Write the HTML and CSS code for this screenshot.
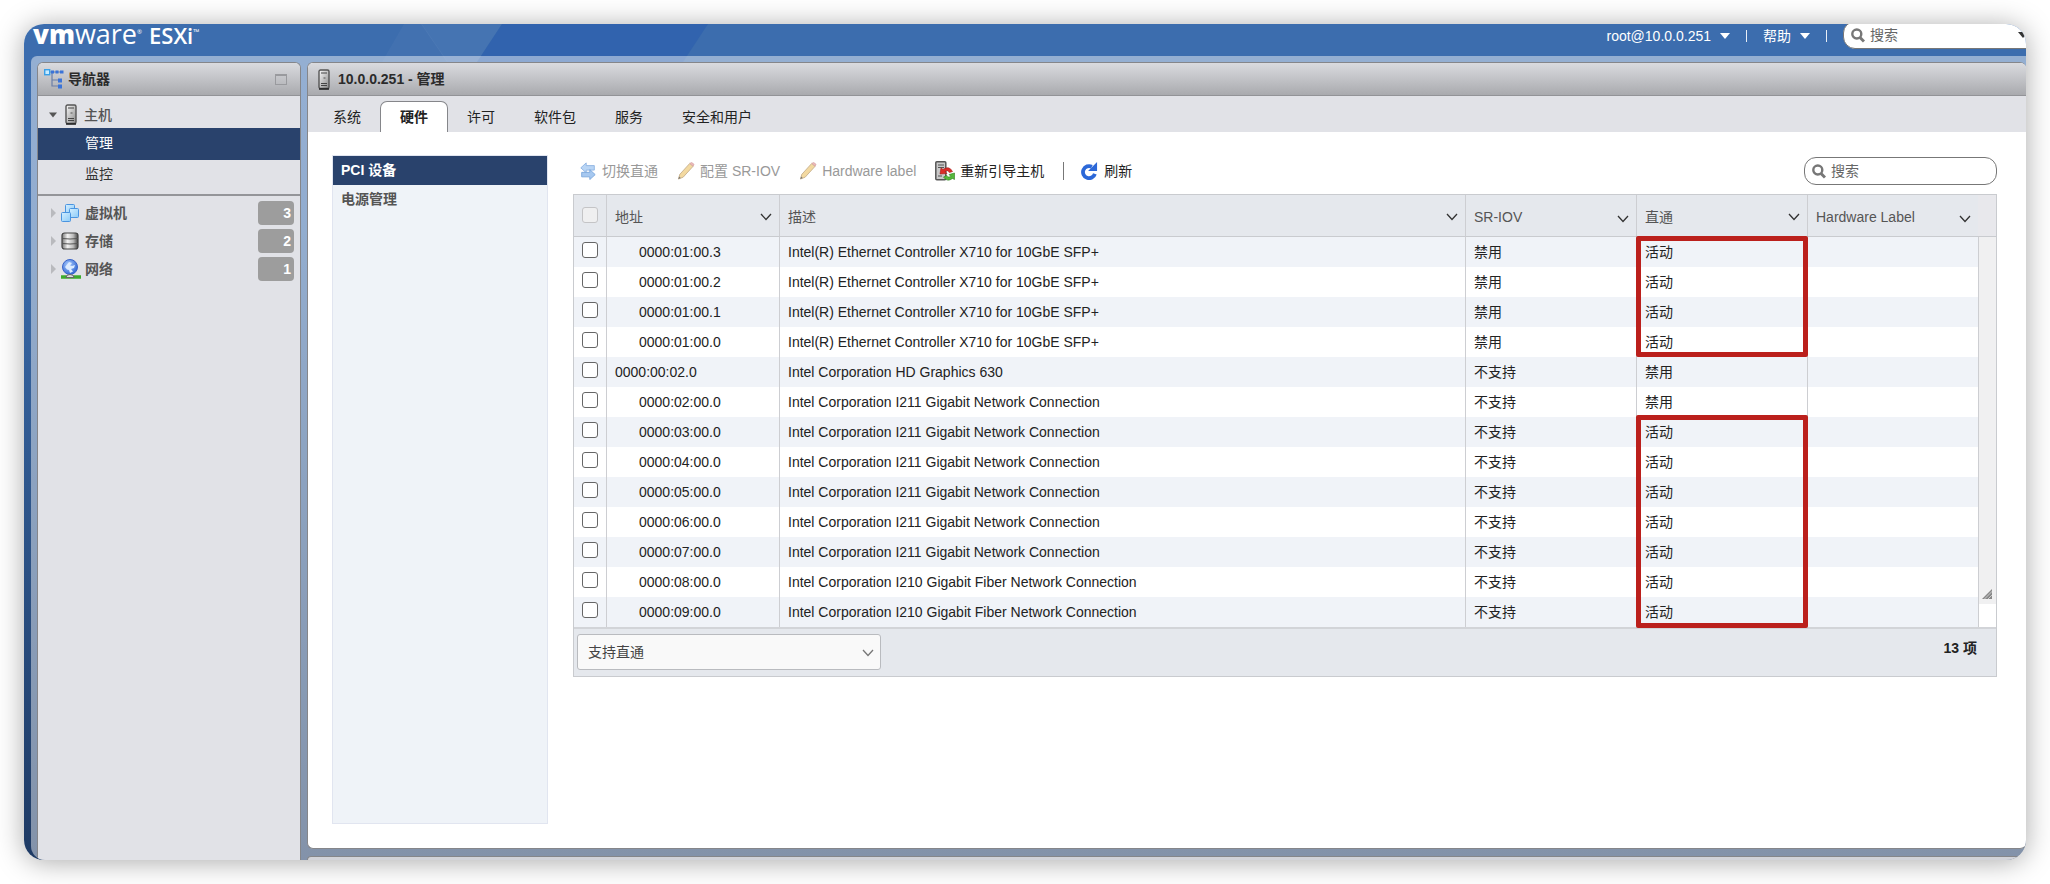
FILE: index.html
```html
<!DOCTYPE html>
<html lang="zh-CN">
<head>
<meta charset="utf-8">
<title>10.0.0.251 - VMware ESXi</title>
<link rel="stylesheet" href="styles.css">
</head>
<body>
<svg class="defs" aria-hidden="true">
  <defs>
    <linearGradient id="steel" x1="0" x2="1" y1="0" y2="0"><stop offset="0" stop-color="#777"/><stop offset=".35" stop-color="#f2f2f2"/><stop offset=".7" stop-color="#bbb"/><stop offset="1" stop-color="#444"/></linearGradient>
    <linearGradient id="tower" x1="0" x2="1" y1="0" y2="1"><stop offset="0" stop-color="#fafafa"/><stop offset="1" stop-color="#888"/></linearGradient>
    <linearGradient id="sky" x1="0" x2="1" y1="0" y2="1"><stop offset="0" stop-color="#d5efff"/><stop offset="1" stop-color="#8ccbf8"/></linearGradient>
    <radialGradient id="ball" cx=".4" cy=".35" r=".7"><stop offset="0" stop-color="#a9ccff"/><stop offset="1" stop-color="#2c62d0"/></radialGradient>
  </defs>
  <symbol id="i-tower" viewBox="0 0 12 21"><rect x="1" y="1" width="10" height="18.500" rx="1.500" fill="url(#tower)" stroke="#555" stroke-width="1.400"/><path d="M3 4h6M3 14.500h6M3 16.500h6" stroke="#444"/><path d="M5.500 9h2" stroke="#555"/><path d="M1 20h10" stroke="#222" stroke-width="1.500"/></symbol>
  <symbol id="i-tree" viewBox="0 0 20 20"><path d="M5 3h14M8 3v14h7M8 11h7" fill="none" stroke="#6b7fa8" stroke-width="1.2"/><rect x=".7" y=".7" width="5" height="5" fill="#c8ecff" stroke="#3aa0e8" stroke-width="1.4"/><path d="M7 1.500h3v3H7zM11.500 1.500h3v3h-3zM16 1.500h3.500v3H16zM14 9.500h4v4h-4zM14 15.500h4v4h-4z" fill="#3b74d8"/></symbol>
  <symbol id="i-vm" viewBox="0 0 18 18"><g fill="url(#sky)" stroke="#4a94e0"><rect x="4.500" y=".5" width="9" height="9" rx="1"/><rect x="8.500" y="4.500" width="9" height="9" rx="1"/><rect x=".5" y="8.500" width="9" height="9" rx="1"/></g></symbol>
  <symbol id="i-disk" viewBox="0 0 18 18"><rect x="1" y="1" width="16" height="16" rx="2.500" fill="url(#steel)" stroke="#444" stroke-width="1.2"/><path d="M1 6.500q8 1 16 0M1 11.500q8 1 16 0" fill="none" stroke="#555"/></symbol>
  <symbol id="i-globe" viewBox="0 0 20 20"><path d="M0 18h20" stroke="#3cab2d" stroke-width="3.500"/><circle cx="9" cy="8" r="7.500" fill="url(#ball)" stroke="#3a64c8"/><path d="M4 8l4-5 3 1-2 2.500 2 .5 3-1-1 3-3 1 2 2.500-3 1.500-1-3-2-.5z" fill="#dcebff"/><path d="M5 18.500q0-3 4-3t4 3z" fill="#ddd" stroke="#666"/></symbol>
  <symbol id="i-swap" viewBox="0 0 18 20"><path d="M7 1v3h9v5H7v3L1 6.500z" fill="#b9d5f5" stroke="#8cb2e2"/><path d="M11 8.500v3H2v5h9v3l6-5.500z" fill="#a6c8f0" stroke="#7ba7dc"/></symbol>
  <symbol id="i-pencil" viewBox="0 0 18 19"><path d="M1 18l1.500-5L13 1.500l3.500 3L6 16z" fill="#f3d9a0" stroke="#c9b390"/><path d="M13 1.500l3.500 3 1-2-2.500-2z" fill="#eeb9b9" stroke="#d5a4a4" stroke-width=".8"/><path d="M1 18l.8-2.600 1.600 1.500z" fill="#777"/></symbol>
  <symbol id="i-reboot" viewBox="0 0 20 20"><rect x=".8" y=".8" width="10" height="18" rx="1" fill="#c9c9c9" stroke="#555" stroke-width="1.500"/><path d="M3 4h6M3 6.500h6M3 15h4" stroke="#555"/><path d="M6 7l2 1.500q6-4.500 9.500 2l-3 1q-2-3-4.500-1l2 2-7 .5z" fill="#dc2c28" stroke="#a31a16" stroke-width=".6"/><path d="M19.500 12v6.500l-2-1q-5.500 4-9-1.500l3-1.500q2 2.500 4.500 1l-2-2z" fill="#55b83b" stroke="#2f7d1f" stroke-width=".6"/></symbol>
  <symbol id="i-refresh" viewBox="0 0 18 19"><path d="M15.200 12.500A6.400 6.400 0 1 1 12 5" fill="none" stroke="#2c68d8" stroke-width="4"/><path d="M17.500 0v9.500H8z" fill="#2c68d8"/></symbol>
  <symbol id="i-search" viewBox="0 0 14 15"><circle cx="5.800" cy="6" r="4.500" fill="none" stroke="#777" stroke-width="2.400"/><path d="M9 9.500l4 4" stroke="#777" stroke-width="3"/></symbol>
  <symbol id="i-chevron" viewBox="0 0 12 8"><path d="M1 1l5 5.500L11 1" fill="none" stroke="currentColor" stroke-width="1.300"/></symbol>
  <symbol id="i-caret" viewBox="0 0 10 6"><path d="M0 0h10L5 6z" fill="currentColor"/></symbol>
</svg>

<div class="window">
  <svg class="facets" viewBox="0 0 700 38" aria-hidden="true"><path d="M380 0h18L424 38h-66z" fill="#ffffff" fill-opacity=".03"/><path d="M397 0h81L453 38h-30z" fill="#fff" fill-opacity=".05"/><path d="M478 0h206L659 38H453z" fill="#2a5dae" fill-opacity=".6"/></svg>
  <header class="top">
    <div class="logo"><b>vm</b><span class="ware">ware</span><sup class="reg">®</sup><span class="esxi">ESXi</span><sup>™</sup></div>
    <div class="account">
      <button class="menu" type="button">root@10.0.0.251 <svg class="caret"><use href="#i-caret"/></svg></button>
      <span class="bar"></span>
      <button class="menu" type="button">帮助 <svg class="caret"><use href="#i-caret"/></svg></button>
      <span class="bar"></span>
      <label class="search search-top"><svg class="glass"><use href="#i-search"/></svg><input type="text" placeholder="搜索" aria-label="搜索"><svg class="caret"><use href="#i-caret"/></svg></label>
    </div>
  </header>

  <div class="frame">
    <nav class="panel nav" aria-label="导航器">
      <h2 class="panel-head"><svg class="ic20"><use href="#i-tree"/></svg>导航器<button class="dock" type="button" aria-label="折叠"></button></h2>
      <a class="node host" href="#"><svg class="caret"><use href="#i-caret"/></svg><svg class="tower"><use href="#i-tower"/></svg><span>主机</span></a>
      <a class="sub selected" href="#">管理</a>
      <a class="sub last" href="#">监控</a>
      <div class="inventory">
        <a class="node" href="#"><i class="arrow"></i><svg class="ic18"><use href="#i-vm"/></svg><span>虚拟机</span><b class="count">3</b></a>
        <a class="node" href="#"><i class="arrow"></i><svg class="ic18"><use href="#i-disk"/></svg><span>存储</span><b class="count">2</b></a>
        <a class="node" href="#"><i class="arrow"></i><svg class="ic20"><use href="#i-globe"/></svg><span>网络</span><b class="count">1</b></a>
      </div>
    </nav>

    <div class="right">
      <main class="panel content">
        <h1 class="panel-head"><svg class="tower"><use href="#i-tower"/></svg>10.0.0.251 - 管理</h1>
        <div class="tabs" role="tablist">
          <button type="button" role="tab">系统</button>
          <button type="button" role="tab" class="active" aria-selected="true">硬件</button>
          <button type="button" role="tab">许可</button>
          <button type="button" role="tab">软件包</button>
          <button type="button" role="tab">服务</button>
          <button type="button" role="tab">安全和用户</button>
        </div>
        <div class="page">
          <div class="side">
            <a class="selected" href="#">PCI 设备</a>
            <a href="#">电源管理</a>
          </div>
          <section class="devices">
            <div class="toolbar">
              <button type="button" disabled><svg class="ic18"><use href="#i-swap"/></svg>切换直通</button>
              <button type="button" disabled><svg class="ic18"><use href="#i-pencil"/></svg>配置 SR-IOV</button>
              <button type="button" disabled><svg class="ic18"><use href="#i-pencil"/></svg>Hardware label</button>
              <button type="button"><svg class="ic20"><use href="#i-reboot"/></svg>重新引导主机</button>
              <span class="bar"></span>
              <button type="button"><svg class="ic18"><use href="#i-refresh"/></svg>刷新</button>
              <label class="search"><svg class="glass"><use href="#i-search"/></svg><input type="text" placeholder="搜索" aria-label="搜索设备"></label>
            </div>
            <div class="grid">
              <div class="grid-body">
                <table>
                  <colgroup><col class="c-check"><col class="c-addr"><col><col class="c-mid"><col class="c-mid"><col class="c-label"></colgroup>
                  <thead>
                    <tr>
                      <th class="check"><input type="checkbox" disabled aria-label="全选"></th>
                      <th><div>地址<button type="button" aria-label="地址菜单"><svg><use href="#i-chevron"/></svg></button></div></th>
                      <th><div>描述<button type="button" aria-label="描述菜单"><svg><use href="#i-chevron"/></svg></button></div></th>
                      <th><div>SR-IOV<button type="button" class="low" aria-label="SR-IOV 菜单"><svg><use href="#i-chevron"/></svg></button></div></th>
                      <th><div>直通<button type="button" aria-label="直通菜单"><svg><use href="#i-chevron"/></svg></button></div></th>
                      <th><div>Hardware Label<button type="button" class="low" aria-label="Hardware Label 菜单"><svg><use href="#i-chevron"/></svg></button></div></th>
                    </tr>
                  </thead>
                  <tbody>
                    <tr><td class="check"><input type="checkbox" aria-label="0000:01:00.3"></td><td class="child">0000:01:00.3</td><td>Intel(R) Ethernet Controller X710 for 10GbE SFP+</td><td>禁用</td><td class="marked">活动<span class="mark four"></span></td><td></td></tr>
                    <tr><td class="check"><input type="checkbox" aria-label="0000:01:00.2"></td><td class="child">0000:01:00.2</td><td>Intel(R) Ethernet Controller X710 for 10GbE SFP+</td><td>禁用</td><td>活动</td><td></td></tr>
                    <tr><td class="check"><input type="checkbox" aria-label="0000:01:00.1"></td><td class="child">0000:01:00.1</td><td>Intel(R) Ethernet Controller X710 for 10GbE SFP+</td><td>禁用</td><td>活动</td><td></td></tr>
                    <tr><td class="check"><input type="checkbox" aria-label="0000:01:00.0"></td><td class="child">0000:01:00.0</td><td>Intel(R) Ethernet Controller X710 for 10GbE SFP+</td><td>禁用</td><td>活动</td><td></td></tr>
                    <tr><td class="check"><input type="checkbox" aria-label="0000:00:02.0"></td><td>0000:00:02.0</td><td>Intel Corporation HD Graphics 630</td><td>不支持</td><td>禁用</td><td></td></tr>
                    <tr><td class="check"><input type="checkbox" aria-label="0000:02:00.0"></td><td class="child">0000:02:00.0</td><td>Intel Corporation I211 Gigabit Network Connection</td><td>不支持</td><td>禁用</td><td></td></tr>
                    <tr><td class="check"><input type="checkbox" aria-label="0000:03:00.0"></td><td class="child">0000:03:00.0</td><td>Intel Corporation I211 Gigabit Network Connection</td><td>不支持</td><td class="marked">活动<span class="mark seven"></span></td><td></td></tr>
                    <tr><td class="check"><input type="checkbox" aria-label="0000:04:00.0"></td><td class="child">0000:04:00.0</td><td>Intel Corporation I211 Gigabit Network Connection</td><td>不支持</td><td>活动</td><td></td></tr>
                    <tr><td class="check"><input type="checkbox" aria-label="0000:05:00.0"></td><td class="child">0000:05:00.0</td><td>Intel Corporation I211 Gigabit Network Connection</td><td>不支持</td><td>活动</td><td></td></tr>
                    <tr><td class="check"><input type="checkbox" aria-label="0000:06:00.0"></td><td class="child">0000:06:00.0</td><td>Intel Corporation I211 Gigabit Network Connection</td><td>不支持</td><td>活动</td><td></td></tr>
                    <tr><td class="check"><input type="checkbox" aria-label="0000:07:00.0"></td><td class="child">0000:07:00.0</td><td>Intel Corporation I211 Gigabit Network Connection</td><td>不支持</td><td>活动</td><td></td></tr>
                    <tr><td class="check"><input type="checkbox" aria-label="0000:08:00.0"></td><td class="child">0000:08:00.0</td><td>Intel Corporation I210 Gigabit Fiber Network Connection</td><td>不支持</td><td>活动</td><td></td></tr>
                    <tr><td class="check"><input type="checkbox" aria-label="0000:09:00.0"></td><td class="child">0000:09:00.0</td><td>Intel Corporation I210 Gigabit Fiber Network Connection</td><td>不支持</td><td>活动</td><td></td></tr>
                  </tbody>
                </table>
                <div class="scroll"><div class="scroll-head"></div><div class="track"><svg class="grip" viewBox="0 0 10 10" aria-hidden="true"><path d="M0 10L10 0v10z" fill="#888"/><path d="M2 10.500L10.500 2M5.500 10.500l5-5" stroke="#ddd" stroke-width=".8"/></svg></div></div>
              </div>
              <div class="grid-foot">
                <div class="picker">
                  <select aria-label="筛选"><option>支持直通</option></select>
                  <svg><use href="#i-chevron"/></svg>
                </div>
                <strong>13 项</strong>
              </div>
            </div>
          </section>
        </div>
      </main>
      <div class="panel next"></div>
    </div>
  </div>
</div>
</body>
</html>
```

FILE: styles.css
```css
* { box-sizing: border-box; }

body {
  margin: 0;
  padding: 24px;
  min-height: 100vh;
  display: flex;
  background: #fff;
  color: #222;
  font: 14px/20px "Liberation Sans", "Noto Sans CJK SC", sans-serif;
}

button, input, select { font: inherit; color: inherit; }
button { border: 0; padding: 0; background: none; }
a { color: inherit; text-decoration: none; }
svg { display: block; flex: none; }

.defs { position: absolute; width: 0; height: 0; }
.ic18 { width: 18px; height: 18px; }
.ic20 { width: 20px; height: 20px; }
.tower { width: 12px; height: 21px; }
.caret { width: 10px; height: 6px; }
.glass { width: 14px; height: 15px; }
.bar { width: 1px; align-self: center; }

.window {
  position: relative;
  flex: 1;
  min-width: 0;
  display: flex;
  flex-direction: column;
  border-radius: 20px;
  background: linear-gradient(#3c6dae, #3c6dae 38px, #3a6aa8 25%, #1e3a64);
  box-shadow: 0 2px 28px rgba(0, 0, 0, .34);
}

.facets { position: absolute; top: 0; left: 0; width: 700px; height: 38px; }

.top {
  position: relative;
  height: 32px;
  display: flex;
  justify-content: space-between;
  color: #fff;
}

.logo {
  display: flex;
  align-items: baseline;
  height: 24px;
  padding-left: 9px;
  font: 28px/24px "Open Sans", sans-serif;
}
.logo b, .logo span { margin-top: -2px; }
.logo b { font-weight: 800; font-size: 26px; }
.logo .ware { font-size: 27px; }
.logo .esxi { margin-left: 7px; font-size: 22px; font-weight: 600; }
.logo sup { align-self: flex-start; margin-top: 4px; font-size: 8px; line-height: 8px; }
.logo .reg { font-size: 6px; }

.account {
  display: flex;
  align-items: flex-start;
  height: 28px;
  overflow: hidden;
  border-top-right-radius: 20px;
}
.account .bar { align-self: flex-start; height: 12px; margin-top: 6px; background: #e8eef6; }
.menu { display: flex; align-items: center; gap: 9px; height: 24px; }
.account .menu + .bar { margin-left: 16px; margin-right: 16px; }

.search {
  display: flex;
  align-items: center;
  width: 193px;
  height: 28px;
  padding: 0 8px 0 7px;
  border: 1px solid #777;
  border-radius: 12px;
  background: #fff;
  color: #333;
}
.search input { flex: 1; min-width: 0; border: 0; padding: 0 0 0 5px; background: none; outline: 0; }
.search input::placeholder { color: #666; opacity: 1; }
.search-top { flex: none; width: 201px; margin: -3px -18px 0 0; padding-right: 15px; color: #333; }

.frame {
  position: relative;
  flex: 1;
  display: flex;
  gap: 6px;
  margin-left: 7px;
  padding: 6px 0 0 6px;
  overflow: hidden;
  border-radius: 6px 0 20px 14px;
  background: rgba(255, 255, 255, .45);
}

.panel { border: 1px solid #85868a; border-radius: 6px; overflow: hidden; }
.panel-head {
  display: flex;
  align-items: center;
  height: 33px;
  margin: 0;
  border-bottom: 1px solid #929397;
  background: linear-gradient(#dadbdf, #a9aaae);
  font-size: 14px;
  line-height: 20px;
  font-weight: 700;
  color: #2b2b2b;
}

.nav { width: 264px; border-bottom: 0; border-radius: 6px 6px 0 0; background: #e1e2e7; }
.nav .panel-head { gap: 4px; padding: 0 13px 0 6px; }
.dock { width: 12px; height: 11px; margin-left: auto; border: 1px solid #999a9e; border-top-width: 2px; }

.node { display: flex; align-items: center; font-weight: 700; color: #555; }
.host { height: 32px; padding: 5px 0 0 11px; }
.host .caret { width: 8px; height: 6px; margin-right: 8px; }
.host .tower { margin-right: 7px; }
.host span { font-weight: 500; }
.sub { display: flex; align-items: center; height: 32px; padding: 0 0 3px 47px; color: #333; }
.sub.selected { background: #29426c; color: #fff; }
.sub.last { height: 36px; padding-bottom: 6px; border-bottom: 2px solid #949599; }
.inventory { display: grid; gap: 4px; padding: 5px 6px 0 13px; }
.inventory .node { display: grid; grid-template-columns: 10px 24px 1fr 36px; height: 24px; }
.arrow { border: 5px solid transparent; border-left-color: #b9babe; border-right: 0; width: 5px; }
.count {
  height: 24px;
  padding-right: 3px;
  border-radius: 4px;
  background: #9d9d9d;
  color: #fff;
  line-height: 24px;
  text-align: right;
}

.right { flex: 1; min-width: 0; display: flex; flex-direction: column; gap: 7px; }
.content { flex: 1; display: flex; flex-direction: column; border-right: 0; background: #fff; }
.content .panel-head { gap: 8px; padding-left: 10px; }
.next { height: 4px; border-bottom: 0; border-radius: 6px 0 0 0; background: #d2d3d9; }

.tabs { display: flex; align-items: flex-end; gap: 1px; height: 36px; padding-left: 6px; background: #e1e2e7; }
.tabs button { height: 30px; padding: 0 19px; }
.tabs .active {
  border-radius: 6px 6px 0 0;
  background: #fff;
  box-shadow: 0 0 0 1px #85868a;
  clip-path: inset(-1px -1px 0 -1px);
  font-weight: 700;
}

.page { flex: 1; display: flex; gap: 25px; padding: 23px 29px 24px 24px; }
.side { width: 216px; border: 1px solid #e1e5f0; background: #eff3f8; font-weight: 700; color: #555; }
.side a { display: flex; align-items: center; height: 29px; padding: 0 0 1px 8px; }
.side .selected { background: #29426c; color: #fff; }

.devices { flex: 1; min-width: 0; }
.toolbar { display: flex; align-items: center; height: 30px; margin: 1px 0 8px; padding-left: 6px; gap: 19px; }
.toolbar button { display: flex; align-items: center; gap: 5px; }
.toolbar button:disabled { color: #999; }
.toolbar .bar { height: 18px; background: #777; }
.toolbar .bar + button { margin-left: -3px; gap: 6px; }
.toolbar .search { margin-left: auto; }

.grid { border: 1px solid #c9cbcf; background: #e5e8ed; }
.grid-body { display: flex; border-bottom: 2px solid #d2d4d8; background: #fff; }
table { flex: 1; min-width: 0; width: 100%; table-layout: fixed; border-collapse: separate; border-spacing: 0; }
.c-check { width: 33px; }
.c-addr { width: 173px; }
.c-mid { width: 171px; }
.c-label { width: 170px; }
th, td { padding: 0 8px; text-align: left; border-right: 1px solid #cdced2; }
th:last-child, td:last-child { border-right: 0; }
th { height: 42px; padding-right: 7px; background: #e5e8ed; border-bottom: 1px solid #c9cbcf; font-weight: 400; color: #555; }
th div { display: flex; align-items: center; justify-content: space-between; height: 24px; margin-top: 3px; }
th button { color: #333; }
th svg { width: 12px; height: 8px; }
th .low { padding-top: 4px; }
td { height: 30px; padding-bottom: 1px; }
tbody tr:nth-child(odd) { background: #f0f3f8; }
.child { padding-left: 32px; }
.check { padding: 0 0 4px 8px; }
th.check { padding-bottom: 1px; }
input[type="checkbox"] {
  appearance: none;
  display: block;
  width: 16px;
  height: 16px;
  margin: 0;
  border: 1px solid #666;
  border-radius: 3px;
  background: #fff;
}
input[type="checkbox"]:disabled { border-color: #c4c4c6; background: #efeff0; }

.marked { position: relative; }
.mark { position: absolute; top: -1px; left: -1px; right: -1px; border: 5px solid #bb201c; border-radius: 2px; }
.four { height: calc(400% + 1px); }
.seven { height: calc(700% + 3px); top: -2px; }

.scroll { display: flex; flex-direction: column; width: 18px; }
.scroll-head { height: 42px; border-bottom: 1px solid #c9cbcf; background: #e8e8ec; }
.track {
  flex: 1;
  display: flex;
  align-items: flex-end;
  padding: 0 0 28px 3px;
  border-left: 1px solid #cdced2;
  background: linear-gradient(#f0f0f1, #f0f0f1) no-repeat 0 0 / 100% calc(100% - 23px);
}
.grip { width: 10px; height: 10px; }

.grid-foot { display: flex; justify-content: space-between; height: 47px; padding: 5px 19px 5px 3px; }
.grid-foot strong { line-height: 28px; }
.picker { position: relative; width: 304px; height: 36px; }
.picker select {
  appearance: none;
  width: 100%;
  height: 36px;
  padding: 0 30px 0 10px;
  border: 1px solid #b9bbbf;
  border-radius: 3px;
  background: #f9f9f9;
  color: #444;
}
.picker svg { position: absolute; right: 7px; top: 15px; width: 12px; height: 8px; color: #777; pointer-events: none; }
```
